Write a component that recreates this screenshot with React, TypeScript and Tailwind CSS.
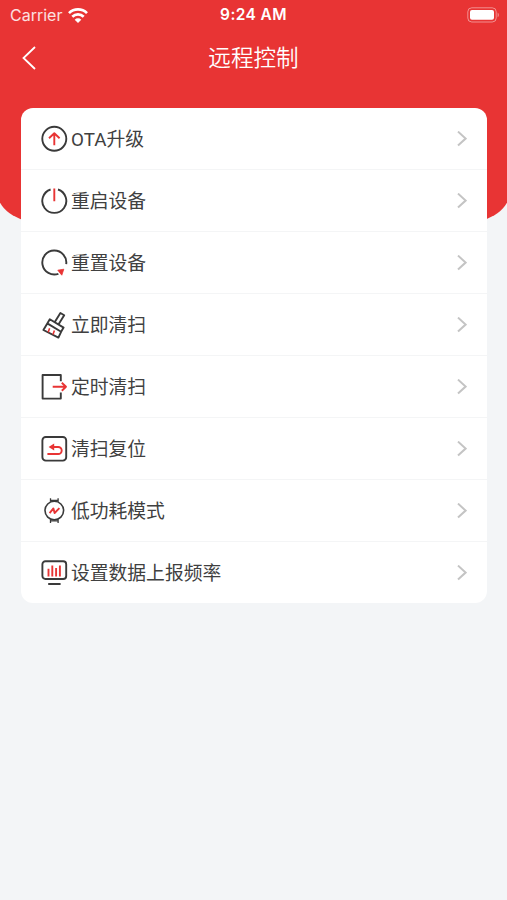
import type { ReactNode } from "react";

type MenuItem = {
  label: string;
  icon: ReactNode;
};

const RED = "#e83434";

const menuItems: MenuItem[] = [
  {
    label: "OTA升级",
    icon: (
      <>
        <circle cx="14.3" cy="13.8" r="12" />
        <path stroke={RED} d="M14.3 20.3V8.6M9 13.3l5.3-5 5.3 5" />
      </>
    ),
  },
  {
    label: "重启设备",
    icon: (
      <>
        <path d="M10.6 2.5a12 12 0 1 0 7.4 0" />
        <path stroke={RED} d="M14.3 1.4v12.8" />
      </>
    ),
  },
  {
    label: "重置设备",
    icon: (
      <>
        <path d="M18.4 24.8A12 12 0 1 1 26.2 15.2" />
        <path fill={RED} stroke={RED} strokeWidth="0.8" d="M17.8 21.2l6-1-2 6z" />
      </>
    ),
  },
  {
    label: "立即清扫",
    icon: (
      <>
        <path d="M9.8 8.2l13.8 8.4-2.5 4.2-13.8-8.4zM7.3 12.4L3.4 19l15 7.6 2.7-5.8" />
        <path d="M14.8 11l5.6-9 3.8 2.3-5.6 9" />
        <path stroke={RED} strokeWidth="1.6" d="M8.2 21.2l1.4-4M13 23.6l1.4-4" />
      </>
    ),
  },
  {
    label: "定时清扫",
    icon: (
      <>
        <path d="M20.8 8.2V2H2.6v23.6h18.2v-6" />
        <path stroke={RED} d="M12.7 13.7h13M21.8 9.7l4.2 4-4.2 4" />
      </>
    ),
  },
  {
    label: "清扫复位",
    icon: (
      <>
        <rect x="2.4" y="2" width="23.8" height="23.6" rx="3.4" />
        <path stroke={RED} d="M7.4 19h10.8a3.5 3.5 0 0 0 0-7H11" />
        <path fill={RED} stroke="none" d="M8.6 12l5.6-3.6v7.2z" />
      </>
    ),
  },
  {
    label: "低功耗模式",
    icon: (
      <>
        <circle cx="14.3" cy="13.6" r="9.3" strokeWidth="1.6" />
        <path strokeWidth="1.3" d="M10.5 1.2v3.6M18.1 1.2v3.6M10.5 3.4h7.6M10.5 22.4V26M18.1 22.4V26M10.5 23.8h7.6" />
        <path stroke={RED} d="M9.6 16.2l3.8-4.8 1.2 4.6 4.8-4.8" />
      </>
    ),
  },
  {
    label: "设置数据上报频率",
    icon: (
      <>
        <rect x="2.4" y="2.2" width="23.8" height="17.8" rx="3" />
        <path d="M8.2 25h12.4" />
        <path stroke={RED} d="M8.5 9.8v7.6M12.3 6.6v10.8M16.1 9v8.4M19.9 6.6v10.8" />
      </>
    ),
  },
];

function StatusBar() {
  return (
    <div className="grid h-[30px] grid-cols-[1fr_auto_1fr] items-center pl-2.5 pr-2 font-['Inter','Liberation_Sans',sans-serif] text-white">
      <div className="flex items-center gap-1.5">
        <span className="text-base leading-none text-white/85">Carrier</span>
        <svg className="h-[15px] w-5" viewBox="0 0 20 15" fill="none" stroke="currentColor" strokeWidth="2.7">
          <path d="M1 5.1a12.9 12.9 0 0 1 18 0M4.3 8.8a8.1 8.1 0 0 1 11.4 0" />
          <path fill="currentColor" stroke="none" d="M10 15l-3.3-3.3a4.7 4.7 0 0 1 6.6 0z" />
        </svg>
      </div>
      <span className="-ml-0.5 text-[15.5px] font-semibold leading-none tracking-[0.4px]">9:24 AM</span>
      <svg className="h-4 w-8 justify-self-end" viewBox="0 0 32 16" fill="none">
        <rect x="0.8" y="0.8" width="28.4" height="14.2" rx="4" stroke="white" strokeOpacity="0.45" />
        <rect x="3" y="3" width="24" height="9.8" rx="2" fill="white" />
        <path d="M30.6 5.6c1.6.8 1.6 3.8 0 4.6z" fill="white" fillOpacity="0.45" />
      </svg>
    </div>
  );
}

function MenuRow({ label, icon }: MenuItem) {
  return (
    <li className="flex h-[62px] items-center border-b border-[#f4f5f6] pl-[19px] pr-5 last:h-[61px] last:border-b-0">
      <svg
        className="h-7 w-7 shrink-0"
        viewBox="0 0 28 28"
        fill="none"
        stroke="#3a3a3a"
        strokeWidth="1.9"
        strokeLinejoin="round"
      >
        {icon}
      </svg>
      <span className="ml-[3px] flex-1 pt-1 text-[18.8px] leading-none text-[#404040]">{label}</span>
      <svg className="h-4 w-2.5 shrink-0" viewBox="0 0 10 16" fill="none" stroke="#c4c4c4" strokeWidth="2">
        <path d="M1 .6l7.6 7L1 14.6" />
      </svg>
    </li>
  );
}

export default function App() {
  return (
    <div className="h-[900px] w-full overflow-hidden bg-[#f3f5f7] font-['Roboto','Noto_Sans_CJK_SC',sans-serif]">
      <header className="-mx-0.5 h-[224px] rounded-b-[50px_30px] bg-[#e83434] px-0.5">
        <StatusBar />
        <div className="grid h-14 grid-cols-[60px_1fr_60px] items-center text-white">
          <svg className="ml-[22px] h-6 w-3.5" viewBox="0 0 14 24" fill="none" stroke="currentColor" strokeWidth="1.8">
            <path d="M13 1L1.5 12 13 23" />
          </svg>
          <h1 className="pb-px text-center font-['Noto_Sans_CJK_SC',sans-serif] text-[22.6px] font-[350] leading-none">
            远程控制
          </h1>
        </div>
      </header>
      <ul className="-mt-[116px] ml-[21px] mr-5 overflow-hidden rounded-xl bg-white">
        {menuItems.map((item) => (
          <MenuRow key={item.label} {...item} />
        ))}
      </ul>
    </div>
  );
}
